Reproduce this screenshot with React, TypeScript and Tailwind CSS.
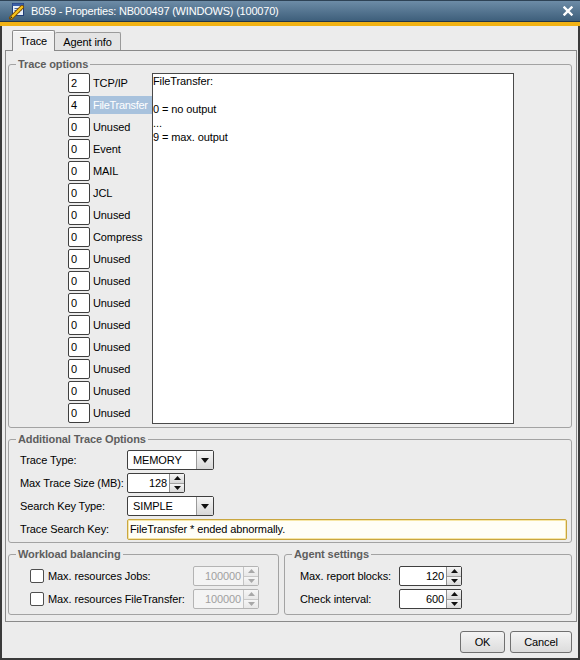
import React from "react";

const UpTri = ({ c = "#111" }: { c?: string }) => (
  <svg width="7" height="4" viewBox="0 0 7 4"><path d="M0 4 L3.5 0 L7 4 Z" fill={c} /></svg>
);
const DownTri = ({ c = "#111" }: { c?: string }) => (
  <svg width="7" height="4" viewBox="0 0 7 4"><path d="M0 0 L7 0 L3.5 4 Z" fill={c} /></svg>
);

function Spinner({ value, w, disabled }: { value: string; w: string; disabled?: boolean }) {
  return (
    <div
      className={`flex h-[20px] ${w} rounded-[2px] border ${
        disabled ? "border-[#b4b4b4] bg-[#f4f4f4] text-[#a0a0a0]" : "border-[#3f3f3f] bg-white text-black"
      }`}
    >
      <div className="flex flex-1 items-center justify-end pr-[2px]">{value}</div>
      <div className={`flex w-[15px] flex-col border-l ${disabled ? "border-[#c4c4c4]" : "border-[#8f8f8f]"}`}>
        <div
          className={`flex flex-1 items-center justify-center border-b bg-gradient-to-b ${
            disabled ? "border-[#c8c8c8] from-[#f6f6f6] to-[#e8e8e8]" : "border-[#a0a0a0] from-[#f6f6f6] to-[#d8d8d8]"
          }`}
        >
          <UpTri c={disabled ? "#a8a8a8" : "#111"} />
        </div>
        <div
          className={`flex flex-1 items-center justify-center bg-gradient-to-b ${
            disabled ? "from-[#f6f6f6] to-[#e8e8e8]" : "from-[#f6f6f6] to-[#d8d8d8]"
          }`}
        >
          <DownTri c={disabled ? "#a8a8a8" : "#111"} />
        </div>
      </div>
    </div>
  );
}

function Combo({ value }: { value: string }) {
  return (
    <div className="flex h-[20px] w-[87px] rounded-[2px] border border-[#3f3f3f] bg-white">
      <div className="flex flex-1 items-center pl-[5px]">{value}</div>
      <div className="flex w-[17px] items-center justify-center border-l border-[#9a9a9a] bg-gradient-to-b from-[#f6f6f6] to-[#d8d8d8]">
        <svg width="8" height="5" viewBox="0 0 8 5"><path d="M0 0 L8 0 L4 5 Z" fill="#111" /></svg>
      </div>
    </div>
  );
}

function Legend({ children }: { children: React.ReactNode }) {
  return <legend className="ml-[7px] px-[2px] font-bold leading-[14px] text-[#5e5e5e]">{children}</legend>;
}

const traceRows: [string, string][] = [
  ["2", "TCP/IP"],
  ["4", "FileTransfer"],
  ["0", "Unused"],
  ["0", "Event"],
  ["0", "MAIL"],
  ["0", "JCL"],
  ["0", "Unused"],
  ["0", "Compress"],
  ["0", "Unused"],
  ["0", "Unused"],
  ["0", "Unused"],
  ["0", "Unused"],
  ["0", "Unused"],
  ["0", "Unused"],
  ["0", "Unused"],
  ["0", "Unused"],
];

export default function App() {
  return (
    <div className="flex h-[660px] w-[580px] flex-col overflow-hidden bg-[#ececec] font-['Liberation_Sans',Arial,sans-serif] text-[11px] leading-[14px] tracking-[-0.1px] text-black">
      {/* Title bar */}
      <div className="flex h-[21px] items-center border-t border-[#2e4255] bg-gradient-to-b from-[#6d8ca7] to-[#3e5f7b] pl-[8px] pr-[7px]">
        <svg width="18" height="18" viewBox="0 0 18 18" className="mr-[5px]">
          <rect x="4.5" y="1.5" width="11" height="12" fill="#e6eef8" stroke="#223f7a" />
          <rect x="4.5" y="1.5" width="11" height="2.5" fill="#3a5fa8" />
          <path d="M6.5 6.5h7M6.5 8.5h7M6.5 10.5h5" stroke="#4a66a0" strokeWidth="1" />
          <path d="M3 16 L14 5" stroke="#7a4a00" strokeWidth="4" strokeLinecap="round" />
          <path d="M3 16 L14 5" stroke="#f7c31c" strokeWidth="2.4" strokeLinecap="round" />
          <path d="M1.5 17.2 L3.2 14.3 L4.6 15.8 Z" fill="#2a2a2a" />
        </svg>
        <span className="flex-1 whitespace-nowrap text-[11px] tracking-[-0.2px] text-white">
          B059 - Properties: NB000497 (WINDOWS) (100070)
        </span>
        <svg width="10" height="10" viewBox="0 0 10 10">
          <path d="M1.5 1.5 L8.5 8.5 M8.5 1.5 L1.5 8.5" stroke="#ffffff" strokeWidth="2.4" strokeLinecap="square" />
        </svg>
      </div>
      <div className="h-[1px] bg-[#24374a]" />
      <div className="h-[4px] bg-[#f1b214]" />

      {/* Body */}
      <div className="flex flex-1 flex-col border-x-2 border-b-2 border-[#3a3a3a]">
        {/* Tabs */}
        <div className="flex h-[24px] items-end pl-[10px]">
          <div className="relative z-10 -mb-px flex h-[21px] w-[43px] items-center justify-center rounded-t-[2px] border border-b-0 border-[#8a8a8a] bg-[#f1f1f1] shadow-[inset_0_1px_0_#ffffff]">
            Trace
          </div>
          <div className="flex h-[18px] w-[66px] items-center justify-center rounded-t-[2px] border border-b-0 border-l-0 border-[#9a9a9a] bg-[#e4e4e4]">
            Agent info
          </div>
        </div>

        {/* Panel */}
        <div className="ml-[3px] flex h-[572px] w-[572px] flex-col gap-[4px] border border-[#8a8a8a] pb-[6px] pl-[2px] pr-[4px] pt-[6px]">
          {/* Trace options */}
          <fieldset className="rounded-[3px] border border-[#a3a3a3]">
            <Legend>Trace options</Legend>
            <div className="flex pb-[3px] pl-[59px] pt-[2px]">
              <div className="flex flex-col gap-[2px]">
                {traceRows.map(([v, label], i) => (
                  <div key={i} className="flex h-[20px] items-center">
                    <div className="flex h-[20px] w-[22px] items-center rounded-[2px] border border-[#3f3f3f] bg-white pl-[2px]">
                      {v}
                    </div>
                    <div
                      className={`flex h-[18px] w-[62px] items-center overflow-hidden whitespace-nowrap pl-[3px] ${
                        i === 1 ? "bg-[#a8c2dd] tracking-[-0.3px] text-white" : ""
                      }`}
                    >
                      {label}
                    </div>
                  </div>
                ))}
              </div>
              <div className="h-[351px] w-[362px] border border-[#4a4a4a] bg-white">
                <div>FileTransfer:</div>
                <div>&nbsp;</div>
                <div>0 = no output</div>
                <div>...</div>
                <div>9 = max. output</div>
              </div>
            </div>
          </fieldset>

          {/* Additional Trace Options */}
          <fieldset className="rounded-[3px] border border-[#a3a3a3]">
            <Legend>Additional Trace Options</Legend>
            <div className="flex flex-col gap-[3px] pb-[3px] pl-[11px] pt-[4px]">
              <div className="flex h-[20px] items-center">
                <div className="w-[107px]">Trace Type:</div>
                <Combo value="MEMORY" />
              </div>
              <div className="flex h-[20px] items-center">
                <div className="w-[107px] whitespace-nowrap">Max Trace Size (MB):</div>
                <Spinner value="128" w="w-[58px]" />
              </div>
              <div className="flex h-[20px] items-center">
                <div className="w-[107px]">Search Key Type:</div>
                <Combo value="SIMPLE" />
              </div>
              <div className="flex h-[20px] items-center">
                <div className="w-[107px]">Trace Search Key:</div>
                <div className="flex h-[21px] w-[440px] items-center rounded-[2px] border border-[#c9a640] bg-[#fffef6] pl-[2px] shadow-[inset_0_0_0_1px_#f6e6a6]">
                  FileTransfer * ended abnormally.
                </div>
              </div>
            </div>
          </fieldset>

          {/* Bottom row */}
          <div className="flex gap-[5px]">
            <fieldset className="w-[271px] rounded-[3px] border border-[#a3a3a3]">
              <Legend>Workload balancing</Legend>
              <div className="flex flex-col gap-[3px] pb-[5px] pl-[21px] pt-[5px]">
                <div className="flex h-[20px] items-center">
                  <div className="h-[14px] w-[14px] rounded-[2px] border border-[#4f4f4f] bg-white" />
                  <div className="ml-[4px] w-[145px] whitespace-nowrap">Max. resources Jobs:</div>
                  <Spinner value="100000" w="w-[66px]" disabled />
                </div>
                <div className="flex h-[20px] items-center">
                  <div className="h-[14px] w-[14px] rounded-[2px] border border-[#4f4f4f] bg-white" />
                  <div className="ml-[4px] w-[145px] whitespace-nowrap">Max. resources FileTransfer:</div>
                  <Spinner value="100000" w="w-[66px]" disabled />
                </div>
              </div>
            </fieldset>
            <fieldset className="w-[288px] rounded-[3px] border border-[#a3a3a3]">
              <Legend>Agent settings</Legend>
              <div className="flex flex-col gap-[3px] pb-[5px] pl-[15px] pt-[5px]">
                <div className="flex h-[20px] items-center">
                  <div className="w-[99px] whitespace-nowrap">Max. report blocks:</div>
                  <Spinner value="120" w="w-[63px]" />
                </div>
                <div className="flex h-[20px] items-center">
                  <div className="w-[99px] whitespace-nowrap">Check interval:</div>
                  <Spinner value="600" w="w-[63px]" />
                </div>
              </div>
            </fieldset>
          </div>
        </div>

        {/* Buttons */}
        <div className="mt-[9px] flex justify-end gap-[5px] pr-[6px]">
          <div className="flex h-[22px] w-[45px] items-center justify-center rounded-[3px] border border-[#707070] bg-gradient-to-b from-[#f4f4f4] to-[#dcdcdc]">
            OK
          </div>
          <div className="flex h-[22px] w-[62px] items-center justify-center rounded-[3px] border border-[#707070] bg-gradient-to-b from-[#f4f4f4] to-[#dcdcdc]">
            Cancel
          </div>
        </div>
      </div>
    </div>
  );
}
